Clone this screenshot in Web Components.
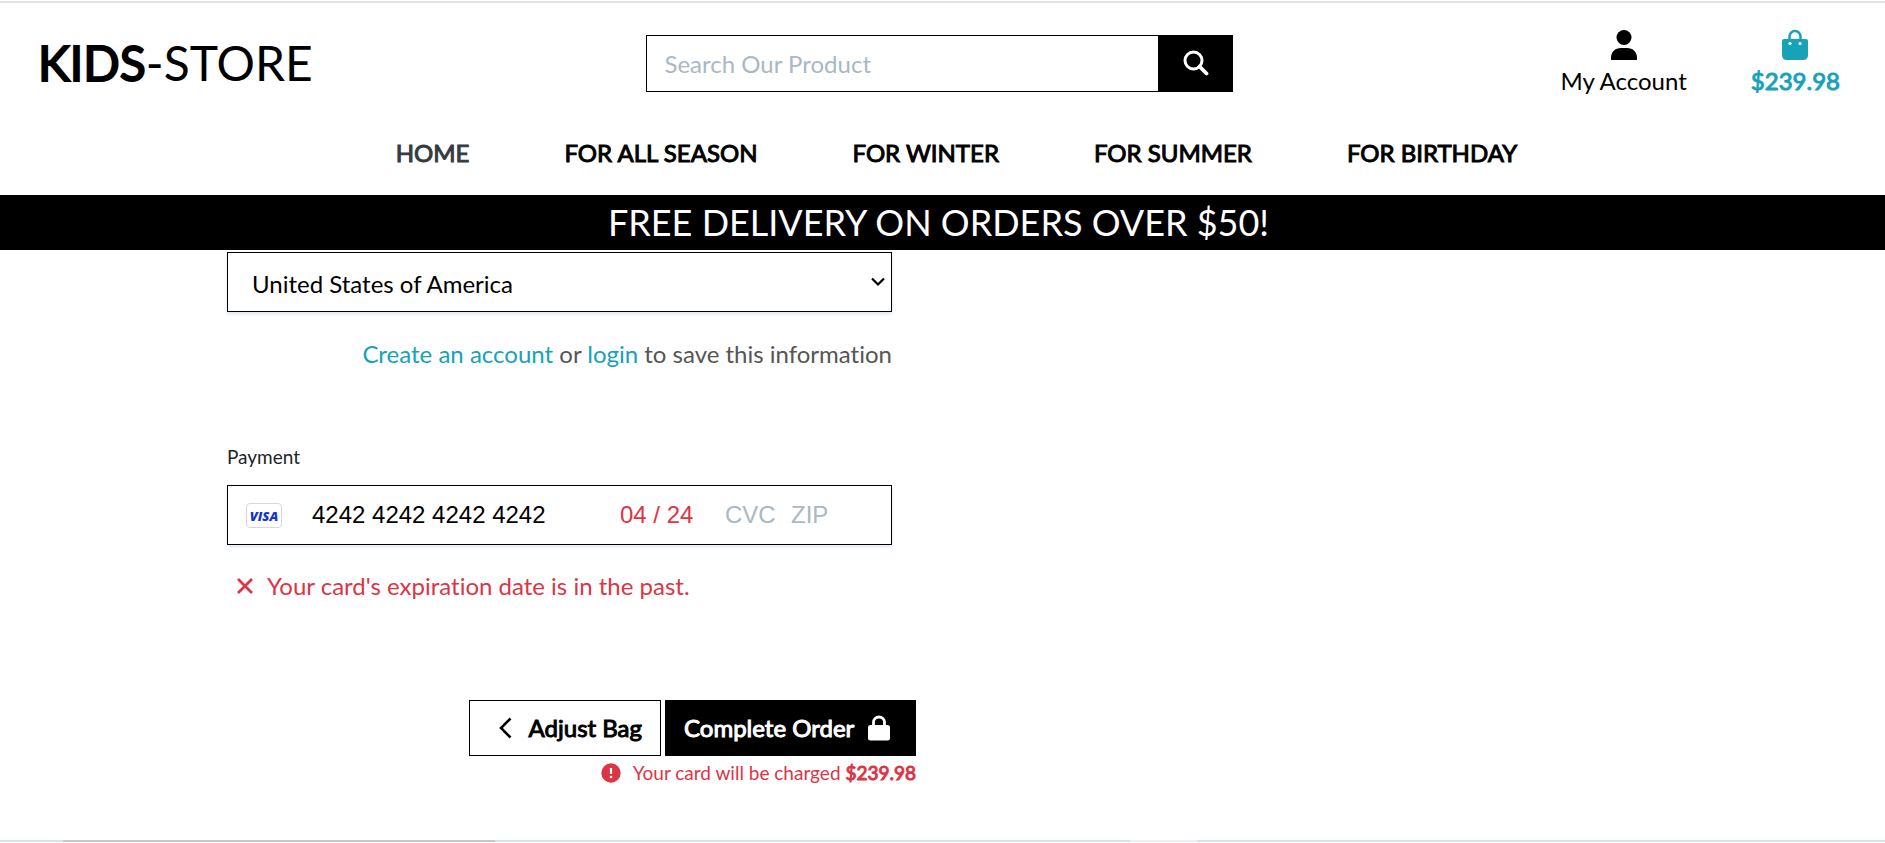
<!DOCTYPE html>
<html lang="en">
<head>
<meta charset="utf-8">
<title>Kids-Store Checkout</title>
<style>
  body { margin: 0; background: #fff; color: #000; font: 24px/36px Lato, "Noto Sans", sans-serif; font-variant-ligatures: none; }
</style>
</head>
<body>
<store-header></store-header>
<promo-banner>FREE DELIVERY ON ORDERS OVER $50!</promo-banner>
<checkout-form></checkout-form>
<page-edge></page-edge>
<script>
const define = (name, html) => customElements.define(name, class extends HTMLElement {
  constructor() {
    super();
    const template = document.createElement('template');
    template.innerHTML = html;
    this.attachShadow({ mode: 'open' }).append(template.content.cloneNode(true));
  }
});

define('nav-link', `
<style>
  :host { display: block; }
  a { color: var(--link, #000); text-decoration: none; -webkit-text-stroke: 1px; white-space: nowrap; }
</style>
<a href="#"><slot></slot></a>`);

define('header-action', `
<style>
  :host { display: block; }
  a { display: flex; flex-direction: column; align-items: center; color: inherit; text-decoration: none; white-space: nowrap; }
  ::slotted(svg) { display: block; height: 36px; width: 36px; }
</style>
<a href="#"><slot name="icon"></slot><span><slot></slot></span></a>`);

define('product-search', `
<style>
  :host { display: block; }
  form { display: flex; height: 57px; }
  input { flex: 1; min-width: 0; box-sizing: border-box; border: 1px solid #000; border-radius: 0; padding: 2px 18px 0; font: inherit; outline: 0; background: #fff; }
  input::placeholder { color: #aab7c4; opacity: 1; }
  button { width: 74px; border: 0; padding: 0; background: #000; color: #fff; display: grid; place-items: center; }
</style>
<form>
  <input type="text" aria-label="Search products" placeholder="Search Our Product">
  <button type="button" aria-label="Search"><svg width="26" height="26" viewBox="0 0 26 26" fill="none" stroke="currentColor"><circle cx="10.5" cy="10.5" r="8.5" stroke-width="3"/><path d="M16.5 16.5l7 7" stroke-width="3.8" stroke-linecap="round"/></svg></button>
</form>`);

define('store-header', `
<style>
  :host { display: block; border-top: 2px solid #dfe3e2; margin-top: 1px; height: 192px; }
  .top { display: grid; grid-template-columns: 1fr 587px 1fr; align-items: center; padding: 18px 45px 0 38px; height: 84px; }
  .logo { color: inherit; text-decoration: none; font-size: 48px; line-height: 60px; }
  .logo b { font-weight: 400; -webkit-text-stroke: 2px; }
  .actions { display: flex; justify-content: flex-end; gap: 64px; }
  .bag { color: #17a2b8; -webkit-text-stroke: 1px; }
  nav { display: flex; justify-content: center; gap: 95px; padding: 30px 0 0 28px; }
  .current { --link: #343a40; }
</style>
<header>
  <div class="top">
    <div><a class="logo" href="#"><b>KIDS</b>-STORE</a></div>
    <product-search></product-search>
    <div class="actions">
      <header-action>
        <svg slot="icon" viewBox="0 0 36 36" fill="currentColor"><circle cx="18" cy="10.5" r="7.5"/><path d="M5 32v-1c0-6 4-10 10-10h6c6 0 10 4 10 10v1c0 .7-.3 1-1 1H6c-.7 0-1-.3-1-1z"/></svg>
        My Account
      </header-action>
      <header-action class="bag">
        <svg slot="icon" viewBox="0 0 36 36"><path d="M12.5 13v-3.500a5.500 5.500 0 0 1 11 0V13" fill="none" stroke="currentColor" stroke-width="2.500"/><path d="M7 12h22q2 0 2 2v14q0 5-5 5H10q-5 0-5-5V14q0-2 2-2z" fill="currentColor" stroke="none"/><g fill="#fff" stroke="none"><circle cx="13" cy="16.5" r="1.600"/><circle cx="23" cy="16.5" r="1.600"/></g></svg>
        $239.98
      </header-action>
    </div>
  </div>
  <nav>
    <nav-link class="current">HOME</nav-link>
    <nav-link>FOR ALL SEASON</nav-link>
    <nav-link>FOR WINTER</nav-link>
    <nav-link>FOR SUMMER</nav-link>
    <nav-link>FOR BIRTHDAY</nav-link>
  </nav>
</header>`);

define('promo-banner', `
<style>
  :host { display: block; background: #000; color: #fff; text-align: center; font-size: 36px; line-height: 55px; padding-right: 8px; }
</style>
<slot></slot>`);

define('country-select', `
<style>
  :host { display: grid; align-items: center; box-shadow: 0 2px 4px #dfe6ed; }
  select { grid-area: 1 / 1; appearance: none; width: 100%; height: 60px; box-sizing: border-box; border: 1px solid #000; border-radius: 0; background: #fff; color: #000; padding: 4px 24px 0; font: inherit; }
  svg { grid-area: 1 / 1; justify-self: end; margin-right: 6px; pointer-events: none; }
</style>
<select aria-label="Country"><option>United States of America</option></select>
<svg width="16" height="10" viewBox="0 0 16 10" fill="none" stroke="#000" stroke-width="2.200"><path d="M2 1.500l6 6 6-6"/></svg>`);

define('card-field', `
<style>
  :host { display: flex; align-items: center; box-sizing: border-box; height: 60px; border: 1px solid #000; padding: 0 18px; box-shadow: 0 2px 4px #dfe6ed; font-family: "Liberation Sans", Arial, sans-serif; }
  .brand { box-sizing: border-box; width: 36px; height: 25px; border: 1px solid #d8d8d8; border-radius: 4px; margin-right: 30px; text-align: center; font: italic 800 13px/24px "Open Sans", sans-serif; color: #1434cb; }
  input { border: 0; padding: 0; margin: 0; outline: 0; background: none; font: inherit; color: inherit; min-width: 0; height: 36px; }
  input::placeholder { color: #aab7c4; opacity: 1; }
  .number { flex: 1; width: 0; color: #000; }
  .expiry { width: 105px; color: #dc3545; }
  .cvc { width: 66px; }
  .zip { width: 82px; }
</style>
<span class="brand">VISA</span>
<input class="number" aria-label="Card number" value="4242 4242 4242 4242">
<input class="expiry" aria-label="Expiration date" value="04 / 24">
<input class="cvc" aria-label="CVC" placeholder="CVC">
<input class="zip" aria-label="ZIP" placeholder="ZIP">`);

define('order-actions', `
<style>
  :host { display: flex; justify-content: flex-end; gap: 4px; }
  a, button { box-sizing: border-box; height: 56px; border: 1px solid #000; border-radius: 0; display: flex; align-items: center; font: inherit; text-decoration: none; -webkit-text-stroke: 1px; white-space: nowrap; }
  a { color: #000; background: #fff; width: 192px; padding: 0 18px 0 28px; justify-content: space-between; }
  button { color: #fff; background: #000; width: 251px; padding: 0 24px 0 18px; justify-content: space-between; }
</style>
<a href="#"><svg width="14" height="22" viewBox="0 0 14 22" fill="none" stroke="currentColor" stroke-width="2.500"><path d="M12.500 1.500L3 11l9.500 9.500"/></svg>Adjust Bag</a>
<button type="button">Complete Order<svg width="24" height="26" viewBox="0 0 24 26"><path d="M6.500 12V7.500a5.500 5.500 0 0 1 11 0V12" fill="none" stroke="currentColor" stroke-width="2.800"/><rect x="1" y="10" width="22" height="15.500" rx="2.500" fill="currentColor" stroke="none"/></svg></button>`);

define('checkout-form', `
<style>
  :host { display: grid; grid-template-columns: 1fr 1fr; gap: 53px; max-width: 1431px; margin: 0 auto; padding-top: 2px; }
  form { min-width: 0; }
  .fields { margin-right: 24px; }
  p { margin: 0; }
  .save { margin-top: 24px; text-align: right; color: #555; }
  .save a { color: #17a2b8; text-decoration: none; }
  fieldset { border: 0; margin: 71px 0 0; padding: 0; min-width: 0; }
  legend { padding: 0; margin-bottom: 14px; font-size: 19px; line-height: 28px; color: #212529; }
  .error { display: flex; align-items: center; gap: 14px; padding-left: 10px; margin-top: 23px; color: #dc3545; }
  order-actions { margin-top: 96px; }
  .charge { display: flex; justify-content: flex-end; align-items: center; gap: 12px; margin-top: 3px; font-size: 19px; line-height: 28px; color: #dc3545; }
  .charge b { font-weight: 400; -webkit-text-stroke: 1px; }
</style>
<form>
  <div class="fields">
    <country-select></country-select>
    <p class="save"><a href="#">Create an account</a> or <a href="#">login</a> to save this information</p>
    <fieldset>
      <legend>Payment</legend>
      <card-field></card-field>
    </fieldset>
    <p class="error"><svg width="16" height="16" viewBox="0 0 16 16" stroke="currentColor" stroke-width="2.800"><path d="M1 1l14 14M15 1L1 15"/></svg><span>Your card's expiration date is in the past.</span></p>
  </div>
  <order-actions></order-actions>
  <p class="charge"><svg width="20" height="20" viewBox="0 0 20 20"><circle cx="10" cy="10" r="9.700" fill="currentColor"/><path d="M10 5v6" stroke="#fff" stroke-width="2.200"/><circle cx="10" cy="14" r="1.300" fill="#fff"/></svg><span>Your card will be charged <b>$239.98</b></span></p>
</form>`);

define('page-edge', `
<style>
  :host { display: grid; grid-template-columns: 63px 432px 635px 67px 1fr; height: 2px; margin-top: 53px; background: #d0e5ed; }
  .bar { grid-column: 2; background: #c8c8c8; }
  .gap { grid-column: 4; background: #ecf1f5; }
</style>
<div class="bar"></div><div class="gap"></div>`);
</script>
</body>
</html>
